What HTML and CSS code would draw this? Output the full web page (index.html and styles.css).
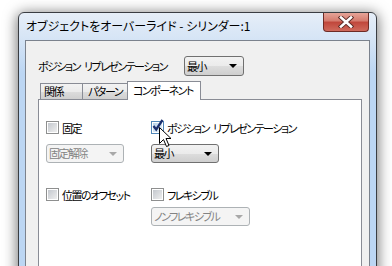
FILE: index.html
```html
<!DOCTYPE html>
<html lang="ja">
<head>
    <meta charset="UTF-8">
    <title>オブジェクトをオーバーライド - シリンダー:1</title>
    <link rel="stylesheet" href="styles.css">
</head>
<body>
    <div class="window">
        <div class="titlebar">
            <span class="title">オブジェクトをオーバーライド - シリンダー:1</span>
            <div class="close-btn">
                <svg width="16" height="12" viewBox="0 0 16 12">
                    <path d="M3 1.5 L13 10.5 M13 1.5 L3 10.5" stroke="#5a2a26" stroke-width="4.4" stroke-linecap="square"/>
                    <path d="M3 1.5 L13 10.5 M13 1.5 L3 10.5" stroke="#fff" stroke-width="2.6" stroke-linecap="square"/>
                </svg>
            </div>
        </div>
        <div class="client">
            <div class="top-row">
                <span class="label">ポジション リプレゼンテーション</span>
                <div class="combo combo-top"><span>最小</span><span class="arrow"></span></div>
            </div>
            <div class="tabs">
                <div class="tab tab-1">関係</div>
                <div class="tab tab-2">パターン</div>
                <div class="tab tab-3 active">コンポーネント</div>
            </div>
            <div class="panel">
                <div class="fields">
                    <label class="check"><span class="box"></span>固定</label>
                    <label class="check">
                        <span class="box checked">
                            <svg class="tick" width="14" height="14" viewBox="0 0 14 14">
                                <path d="M2.5 7 L5.2 10.5 L11.5 1" fill="none" stroke="#1b2f6e" stroke-width="2.3"/>
                            </svg>
                            <svg class="cursor" width="13" height="21" viewBox="0 0 13 21">
                                <path d="M0.5 0.5 L0.5 16.5 L4.5 12.5 L7.5 19.5 L10 18.5 L7 11.5 L12 11.5 Z" fill="#fff" stroke="#000" stroke-width="1"/>
                            </svg>
                        </span>ポジション リプレゼンテーション
                    </label>

                    <div class="combo combo-fixed disabled row-2"><span>固定解除</span><span class="arrow"></span></div>
                    <div class="combo combo-min row-2"><span>最小</span><span class="arrow"></span></div>

                    <label class="check row-3"><span class="box"></span>位置のオフセット</label>
                    <label class="check row-3"><span class="box"></span>フレキシブル</label>

                    <div class="row-4"></div>
                    <div class="combo combo-flex disabled row-4"><span>ノンフレキシブル</span><span class="arrow"></span></div>
                </div>
            </div>
        </div>
    </div>
</body>
</html>
```

FILE: styles.css
```css
* {
    box-sizing: border-box;
}
body {
    margin: 0;
    background-color: #fff;
    font-family: "Noto Sans CJK JP", sans-serif;
    font-size: 11px;
    letter-spacing: -1.5px;
    word-spacing: 3px;
    font-feature-settings: "palt";
    color: #000;
    overflow: hidden;
    white-space: nowrap;
}
.window {
    margin: 12px 0 0 18px;
    width: 359px;
    height: 300px;
    border: 1px solid #3a3d42;
    border-radius: 6px 6px 0 0;
    padding: 0 6px;
    background: linear-gradient(#e6eef8, #d3e3f5 30px, #bcd6f3 60px);
    box-shadow: 0 2px 14px 1px rgba(0, 0, 0, 0.55);
    display: flex;
    flex-direction: column;
}
.titlebar {
    height: 27px;
    display: flex;
    justify-content: space-between;
    align-items: flex-start;
}
.title {
    padding-left: 1px;
    line-height: 25px;
    font-size: 12px;
    letter-spacing: 0;
    word-spacing: 0;
    color: #000;
}
.close-btn {
    width: 46px;
    height: 19px;
    margin-right: 1px;
    border: 1px solid #6e2b25;
    border-top: none;
    border-radius: 0 0 4px 4px;
    background: linear-gradient(#e6a498, #d47a6d 45%, #c0463b 50%, #cf6a5c);
    display: flex;
    align-items: center;
    justify-content: center;
}
.client {
    flex: 1;
    border: 1px solid #7b828d;
    background-color: #f0f0f0;
    padding: 15px 7px 0 12px;
    display: flex;
    flex-direction: column;
}
.top-row {
    display: flex;
    align-items: center;
    height: 20px;
}
.label {
    width: 146px;
}
.combo {
    height: 19px;
    border: 1px solid #707070;
    border-radius: 3px;
    background: linear-gradient(#f2f2f2, #ebebeb 50%, #dddddd 50%, #cfcfcf);
    display: flex;
    align-items: center;
    justify-content: space-between;
    padding: 0 6px 0 2px;
    line-height: 1;
}
.combo-top {
    width: 60px;
    height: 20px;
}
.combo-fixed {
    width: 78px;
}
.combo-min {
    width: 68px;
}
.combo-flex {
    width: 99px;
}
.arrow {
    width: 0;
    height: 0;
    border-left: 4px solid transparent;
    border-right: 4px solid transparent;
    border-top: 4px solid #000;
}
.disabled {
    border-color: #adb2b5;
    background: #f4f4f4;
    color: #838383;
}
.disabled .arrow {
    border-top-color: #a8a8a8;
}
.tabs {
    margin-top: 5px;
    height: 19px;
    margin-bottom: -1px;
    padding-left: 2px;
    display: flex;
    align-items: flex-end;
    position: relative;
    z-index: 1;
}
.tab {
    height: 17px;
    border: 1px solid #898c95;
    background: linear-gradient(#f3f3f3, #ebebeb 50%, #dddddd 50%, #cfcfcf);
    padding-left: 3px;
    line-height: 15px;
}
.tab-1 {
    width: 43px;
}
.tab-2 {
    width: 46px;
    margin-left: -1px;
    padding-left: 5px;
}
.tab-3 {
    width: 74px;
    margin-left: -1px;
    padding-left: 5px;
}
.tab.active {
    height: 19px;
    border-bottom: none;
    background: #fff;
    line-height: 16px;
}
.panel {
    flex: 1;
    border: 1px solid #898c95;
    background-color: #fff;
    padding: 21px 0 0 7px;
}
.fields {
    display: grid;
    grid-template-columns: 105px auto;
    align-items: start;
}
.check {
    display: flex;
    align-items: center;
    gap: 3px;
    height: 13px;
}
.box {
    width: 13px;
    height: 13px;
    border: 1px solid #8e8f8f;
    background-color: #fff;
    padding: 1px;
    position: relative;
    flex-shrink: 0;
}
.box::before {
    content: '';
    display: block;
    width: 9px;
    height: 9px;
    background: linear-gradient(135deg, #c4c8ce, #eeeeee);
}
.box.checked {
    border-color: #4f86b8;
}
.box.checked::before {
    background: linear-gradient(135deg, #b6d2ea, #eaf4fc);
}
.tick {
    position: absolute;
    left: -1px;
    top: -3px;
}
.cursor {
    position: absolute;
    left: 7px;
    top: 5px;
    z-index: 2;
}
.row-2 {
    margin-top: 10px;
}
.row-3 {
    margin-top: 25px;
}
.row-4 {
    margin-top: 6px;
}
```
